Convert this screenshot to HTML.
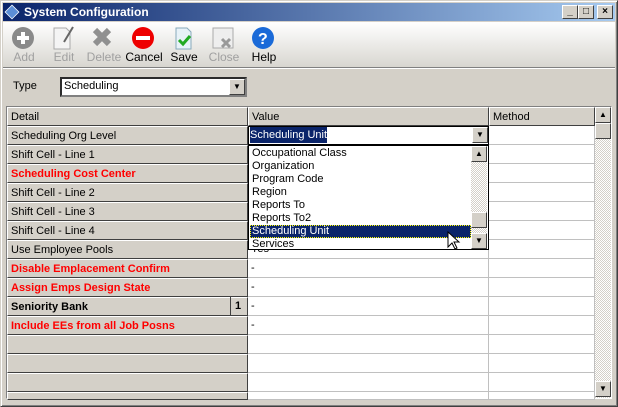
<!DOCTYPE html><html><head><style>
*{margin:0;padding:0;box-sizing:border-box}
body{width:618px;height:407px;background:#d4d0c8;font-family:"Liberation Sans",Tahoma,sans-serif;font-size:11px;position:relative;overflow:hidden}
.a{position:absolute}
.win{left:0;top:0;width:618px;height:407px;border:1px solid;border-color:#d4d0c8 #404040 #404040 #d4d0c8;box-shadow:inset 1px 1px #fff,inset -1px -1px #808080}
.title{left:3px;top:3px;width:612px;height:18px;background:linear-gradient(90deg,#0a246a,#a6caf0);color:#fff;font-weight:bold;font-size:12px;line-height:18px;padding-left:21px}
.tb{width:16px;height:14px;top:5px;background:#d4d0c8;border:1px solid;border-color:#fff #404040 #404040 #fff;font-size:10px;line-height:11px;text-align:center;color:#000;font-weight:bold}
.toolbar{left:3px;top:22px;width:612px;height:45px;background:linear-gradient(#fff,#d8d6d0)}
.btn{top:50px;font-size:12px;text-align:center;width:40px}
.dis{color:#a0a0a0}
.grid{left:6px;top:106px;width:606px;height:293px;border:1px solid;border-color:#808080 #fff #fff #808080;background:#fff}
.cell{position:absolute;height:19px;line-height:18px;padding-left:3px;white-space:nowrap}
.hd{background:#d4d0c8;border:1px solid;border-color:#fff #404040 #404040 #fff}
.red{color:#f00;font-weight:bold}
.vl{border-bottom:1px solid #c0c0c0;border-right:1px solid #c0c0c0;background:#fff}
.sb{background:#d4d0c8;border:1px solid;border-color:#fff #404040 #404040 #fff;width:16px;height:16px}
.chk{background-image:conic-gradient(#fff 25%,#d4d0c8 0 50%,#fff 0 75%,#d4d0c8 0);background-size:2px 2px}
.li{position:absolute;left:1px;width:221px;height:13px;line-height:13px;padding-left:2px}
</style></head><body>
<div class="a win"></div>
<div class="a title">System Configuration</div>
<div class="a" style="left:5px;top:5px;width:14px;height:14px;background:#5b8ed6;border:1px solid #fff;transform:rotate(45deg) scale(.75)"></div>
<div class="a tb" style="left:562px">_</div><div class="a tb" style="left:578px">□</div><div class="a tb" style="left:597px">×</div>
<div class="a toolbar"></div>
<div class="a" style="left:3px;top:67px;width:612px;border-top:1px solid #808080;border-bottom:1px solid #fff"></div>
<svg class="a" style="left:0;top:26px" width="290" height="24">
<circle cx="23" cy="12" r="11" fill="#8a8a8a"/><path d="M23 6v12M17 12h12" stroke="#fff" stroke-width="4"/>
<path d="M54 2h12l4 4v17H54z" fill="#f4f4f4" stroke="#aaa"/><path d="M73 1l-9 15" stroke="#666" stroke-width="2"/>
<path d="M95 4l14 14M109 4L95 18" stroke="#909090" stroke-width="6"/>
<circle cx="143" cy="12" r="11" fill="#e00"/><rect x="136" y="10" width="14" height="4" fill="#fff"/>
<path d="M176 2h11l4 4v17h-15z" fill="#e8f2f8" stroke="#8ab"/><path d="M179 14l4 4 7-8" stroke="#2a2" stroke-width="3" fill="none"/>
<rect x="213" y="2" width="20" height="20" fill="#eee" stroke="#aaa"/><path d="M222 13l8 8M230 13l-8 8" stroke="#999" stroke-width="3"/>
<circle cx="263" cy="12" r="11" fill="#1a6ad8"/><text x="258" y="18" fill="#fff" font-weight="bold" font-size="16" font-family="Liberation Sans">?</text>
</svg>
<div class="a btn dis" style="left:4px">Add</div>
<div class="a btn dis" style="left:44px">Edit</div>
<div class="a btn dis" style="left:84px">Delete</div>
<div class="a btn" style="left:124px">Cancel</div>
<div class="a btn" style="left:164px">Save</div>
<div class="a btn dis" style="left:204px">Close</div>
<div class="a btn" style="left:244px">Help</div>
<div class="a" style="left:13px;top:80px">Type</div>
<div class="a" style="left:60px;top:77px;width:187px;height:20px;background:#fff;border:2px inset #808080;padding-left:2px;line-height:15px">Scheduling</div>
<div class="a sb" style="left:229px;top:79px;font-size:8px;text-align:center;line-height:13px">▼</div>
<div class="a grid">
<div class="cell hd" style="left:0;top:0;width:241px">Detail</div>
<div class="cell hd" style="left:241px;top:0;width:241px">Value</div>
<div class="cell hd" style="left:482px;top:0;width:106px">Method</div>
<div class="a chk" style="left:588px;top:0;width:16px;height:291px"></div>
<div class="a sb" style="left:588px;top:0;font-size:8px;text-align:center;line-height:13px">▲</div>
<div class="a sb" style="left:588px;top:16px"></div>
<div class="a sb" style="left:588px;top:274px;font-size:8px;text-align:center;line-height:13px">▼</div>
<div class="cell hd" style="left:0;top:19px;width:241px">Scheduling Org Level</div>
<div class="cell hd" style="left:0;top:38px;width:241px">Shift Cell - Line 1</div>
<div class="cell hd red" style="left:0;top:57px;width:241px">Scheduling Cost Center</div>
<div class="cell hd" style="left:0;top:76px;width:241px">Shift Cell - Line 2</div>
<div class="cell hd" style="left:0;top:95px;width:241px">Shift Cell - Line 3</div>
<div class="cell hd" style="left:0;top:114px;width:241px">Shift Cell - Line 4</div>
<div class="cell hd" style="left:0;top:133px;width:241px">Use Employee Pools</div>
<div class="cell hd red" style="left:0;top:152px;width:241px">Disable Emplacement Confirm</div>
<div class="cell hd red" style="left:0;top:171px;width:241px">Assign Emps Design State</div>
<div class="cell hd" style="left:0;top:190px;width:241px;font-weight:bold">Seniority Bank<span style="position:absolute;left:222px;top:-1px;border-left:1px solid #404040;padding-left:4px;height:18px">1</span></div>
<div class="cell hd red" style="left:0;top:209px;width:241px">Include EEs from all Job Posns</div>
<div class="cell hd" style="left:0;top:228px;width:241px"></div>
<div class="cell hd" style="left:0;top:247px;width:241px"></div>
<div class="cell hd" style="left:0;top:266px;width:241px"></div>
<div class="cell hd" style="left:0;top:285px;width:241px;height:8px"></div>
<div class="cell vl" style="left:241px;top:133px;width:241px">Yes</div>
<div class="cell vl" style="left:241px;top:152px;width:241px">-</div>
<div class="cell vl" style="left:241px;top:171px;width:241px">-</div>
<div class="cell vl" style="left:241px;top:190px;width:241px">-</div>
<div class="cell vl" style="left:241px;top:209px;width:241px">-</div>
<div class="cell vl" style="left:241px;top:228px;width:241px"></div>
<div class="cell vl" style="left:241px;top:247px;width:241px"></div>
<div class="cell vl" style="left:241px;top:266px;width:241px"></div>
<div class="cell vl" style="left:241px;top:285px;width:241px;height:8px"></div>
<div class="cell vl" style="left:482px;top:19px;width:106px"></div>
<div class="cell vl" style="left:482px;top:38px;width:106px"></div>
<div class="cell vl" style="left:482px;top:57px;width:106px"></div>
<div class="cell vl" style="left:482px;top:76px;width:106px"></div>
<div class="cell vl" style="left:482px;top:95px;width:106px"></div>
<div class="cell vl" style="left:482px;top:114px;width:106px"></div>
<div class="cell vl" style="left:482px;top:133px;width:106px"></div>
<div class="cell vl" style="left:482px;top:152px;width:106px"></div>
<div class="cell vl" style="left:482px;top:171px;width:106px"></div>
<div class="cell vl" style="left:482px;top:190px;width:106px"></div>
<div class="cell vl" style="left:482px;top:209px;width:106px"></div>
<div class="cell vl" style="left:482px;top:228px;width:106px"></div>
<div class="cell vl" style="left:482px;top:247px;width:106px"></div>
<div class="cell vl" style="left:482px;top:266px;width:106px"></div>
<div class="cell vl" style="left:482px;top:285px;width:106px;height:8px"></div>
<div class="a" style="left:241px;top:19px;width:241px;height:19px;background:#fff;border:1px solid #000"><span style="background:#0a246a;color:#fff;margin-left:1px;line-height:16px;display:inline-block">Scheduling Unit</span></div>
<div class="a sb" style="left:465px;top:20px;font-size:8px;text-align:center;line-height:13px">▼</div>
<div class="a" style="left:241px;top:38px;width:241px;height:105px;background:#fff;border:1px solid #000">
<div class="li" style="top:1px">Occupational Class</div>
<div class="li" style="top:14px">Organization</div>
<div class="li" style="top:27px">Program Code</div>
<div class="li" style="top:40px">Region</div>
<div class="li" style="top:53px">Reports To</div>
<div class="li" style="top:66px">Reports To2</div>
<div class="li" style="top:79px;background:#0a246a;color:#fff;outline:1px dotted #ffff00;outline-offset:-1px">Scheduling Unit</div>
<div class="li" style="top:92px">Services</div>
<div class="a chk" style="left:222px;top:0;width:16px;height:103px"></div>
<div class="a sb" style="left:222px;top:0;font-size:8px;text-align:center;line-height:13px">▲</div>
<div class="a sb" style="left:222px;top:66px"></div>
<div class="a sb" style="left:222px;top:87px;font-size:8px;text-align:center;line-height:13px">▼</div>
</div>
</div>
<svg class="a" style="left:447px;top:231px" width="14" height="20"><path d="M1 1v15l4-4 3 6 2-1-3-6h5z" fill="#fff" stroke="#000"/></svg>
</body></html>
